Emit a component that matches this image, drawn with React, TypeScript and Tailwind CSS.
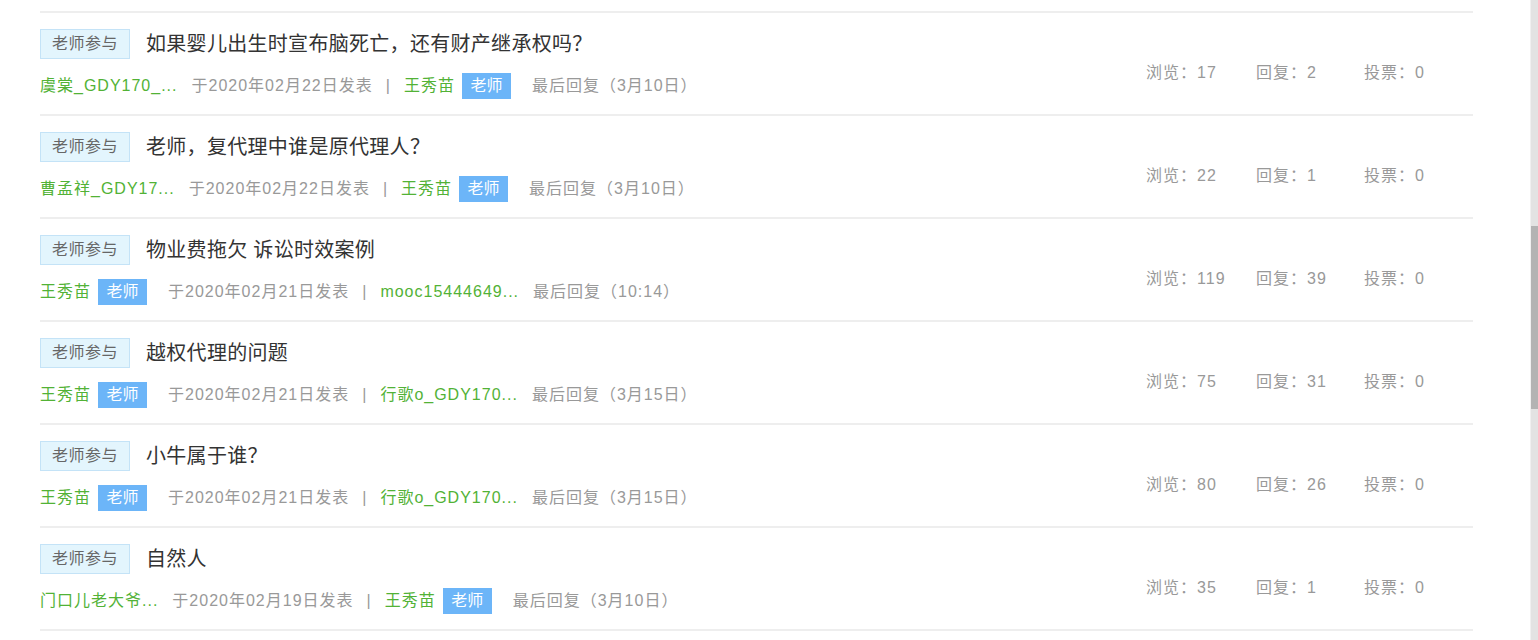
import React from "react";

interface Person {
  name: string;
  teacher?: boolean;
}

interface Topic {
  id: number;
  title: string;
  author: Person;
  date: string;
  replier: Person;
  lastReply: string;
  views: number;
  replies: number;
  votes: number;
}

const topics: Topic[] = [
  {
    id: 1,
    title: "如果婴儿出生时宣布脑死亡，还有财产继承权吗？",
    author: { name: "虞棠_GDY170_..." },
    date: "于2020年02月22日发表",
    replier: { name: "王秀苗", teacher: true },
    lastReply: "最后回复（3月10日）",
    views: 17,
    replies: 2,
    votes: 0,
  },
  {
    id: 2,
    title: "老师，复代理中谁是原代理人？",
    author: { name: "曹孟祥_GDY17..." },
    date: "于2020年02月22日发表",
    replier: { name: "王秀苗", teacher: true },
    lastReply: "最后回复（3月10日）",
    views: 22,
    replies: 1,
    votes: 0,
  },
  {
    id: 3,
    title: "物业费拖欠 诉讼时效案例",
    author: { name: "王秀苗", teacher: true },
    date: "于2020年02月21日发表",
    replier: { name: "mooc15444649..." },
    lastReply: "最后回复（10:14）",
    views: 119,
    replies: 39,
    votes: 0,
  },
  {
    id: 4,
    title: "越权代理的问题",
    author: { name: "王秀苗", teacher: true },
    date: "于2020年02月21日发表",
    replier: { name: "行歌o_GDY170..." },
    lastReply: "最后回复（3月15日）",
    views: 75,
    replies: 31,
    votes: 0,
  },
  {
    id: 5,
    title: "小牛属于谁？",
    author: { name: "王秀苗", teacher: true },
    date: "于2020年02月21日发表",
    replier: { name: "行歌o_GDY170..." },
    lastReply: "最后回复（3月15日）",
    views: 80,
    replies: 26,
    votes: 0,
  },
  {
    id: 6,
    title: "自然人",
    author: { name: "门口儿老大爷..." },
    date: "于2020年02月19日发表",
    replier: { name: "王秀苗", teacher: true },
    lastReply: "最后回复（3月10日）",
    views: 35,
    replies: 1,
    votes: 0,
  },
];

function UserName({ person }: { person: Person }) {
  return (
    <span className={`flex items-center ${person.teacher ? "mr-[21px]" : "mr-[14px]"}`}>
      <span className="text-[#52b236] whitespace-nowrap">{person.name}</span>
      {person.teacher && (
        <span className="ml-[7px] flex h-[26px] w-[49px] items-center justify-center bg-[#6cb5f8] tracking-normal text-white">
          老师
        </span>
      )}
    </span>
  );
}

function TopicRow({ topic }: { topic: Topic }) {
  return (
    <div className="flex h-[103px] border-t-2 border-[#eeeeee]">
      <div className="flex-1 pt-[16px]">
        <div className="flex h-[30px] items-center">
          <span className="flex h-[30px] w-[90px] items-center justify-center border border-[#c4e3f7] bg-[#e3f5fd] text-[16px] tracking-[0.5px] text-[#666666]">
            老师参与
          </span>
          <span className="ml-[16px] text-[20px] tracking-[0.3px] text-[#333333] whitespace-nowrap">
            {topic.title}
          </span>
        </div>
        <div className="mt-[14px] flex h-[26px] items-center text-[16px] leading-[26px] tracking-[1px]">
          <UserName person={topic.author} />
          <span className="text-[#999999] whitespace-nowrap">{topic.date}</span>
          <span className="ml-[13px] mr-[13px] text-[#999999]">|</span>
          <UserName person={topic.replier} />
          <span className="text-[#999999] whitespace-nowrap">{topic.lastReply}</span>
        </div>
      </div>
      <div className="flex w-[327px] pt-[48px] text-[16px] leading-[24px] tracking-[1px] text-[#999999]">
        <span className="w-[110px]">浏览：{topic.views}</span>
        <span className="w-[108px]">回复：{topic.replies}</span>
        <span className="w-[109px]">投票：{topic.votes}</span>
      </div>
    </div>
  );
}

export default function App() {
  return (
    <div className="relative min-h-[640px] w-full bg-white font-['Liberation_Sans','Noto_Sans_CJK_SC',sans-serif]">
      <div className="pt-[11px] pl-[40px]">
        <div className="w-[1433px] border-b-2 border-[#eeeeee]">
          {topics.map((t) => (
            <TopicRow key={t.id} topic={t} />
          ))}
        </div>
      </div>

      {/* fake scrollbar */}
      <div className="absolute right-0 top-0 h-[640px] w-[8px] border-l border-[#f0f0f0] bg-[#e3e3e3]">
        <div className="absolute left-0 top-[226px] h-[183px] w-full bg-[#b3b3b3]" />
      </div>
    </div>
  );
}
